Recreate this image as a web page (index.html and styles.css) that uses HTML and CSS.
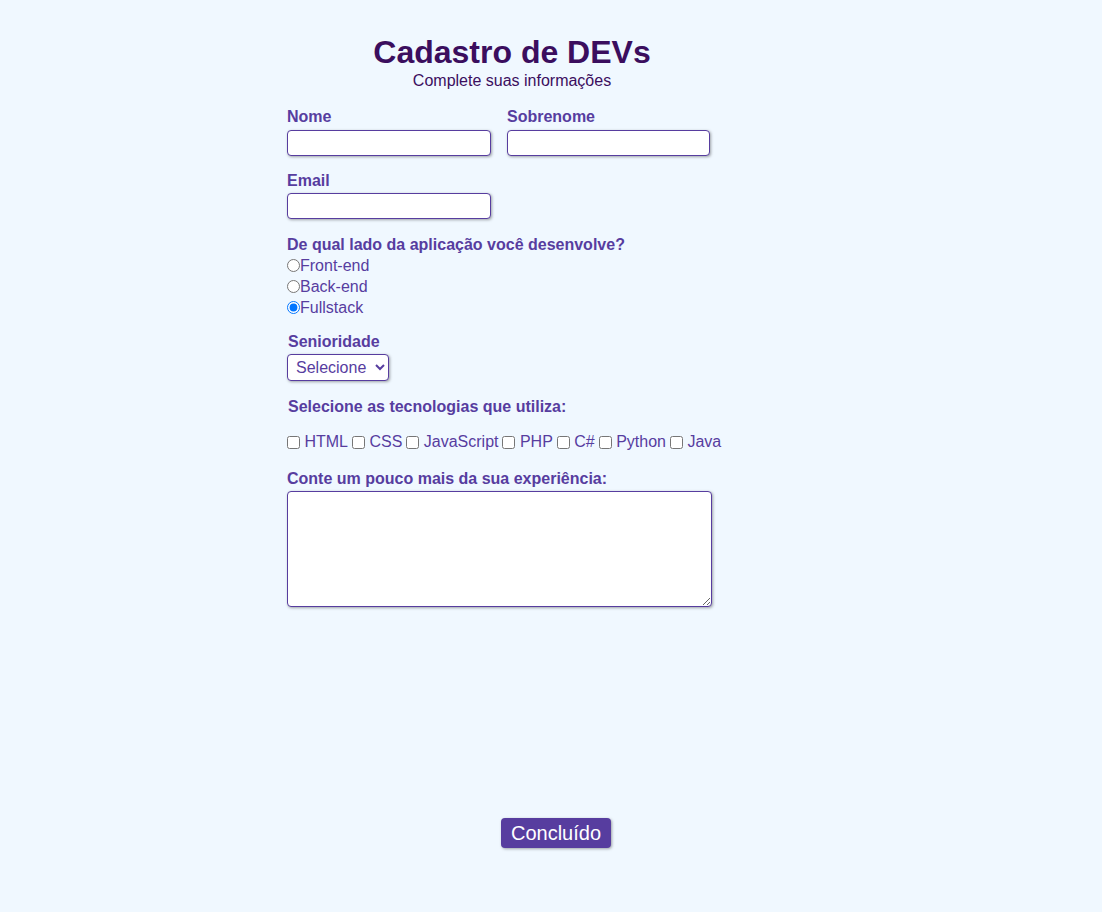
FILE: index.html
```html
<!DOCTYPE html>
<html lang="pt-BR">
<head>
<meta charset="utf-8">
<title>Cadastro de DEVs</title>
<link rel="stylesheet" href="styles.css">
</head>
<body>
<main class="page">
  <form class="form">
    <header class="head">
      <h1 class="title">Cadastro de DEVs</h1>
      <p class="subtitle">Complete suas informações</p>
    </header>

    <div class="row">
      <div class="field">
        <label class="label" for="nome">Nome</label>
        <input class="input" id="nome" type="text">
      </div>
      <div class="field">
        <label class="label" for="sobrenome">Sobrenome</label>
        <input class="input" id="sobrenome" type="text">
      </div>
    </div>

    <div class="field block">
      <label class="label snug" for="email">Email</label>
      <input class="input" id="email" type="email">
    </div>

    <div class="group side">
      <span class="label tight">De qual lado da aplicação você desenvolve?</span>
      <label class="opt"><input type="radio" name="lado" class="radio">Front-end</label>
      <label class="opt"><input type="radio" name="lado" class="radio">Back-end</label>
      <label class="opt"><input type="radio" name="lado" class="radio" checked>Fullstack</label>
    </div>

    <div class="field indent senior">
      <label class="label snug" for="sen">Senioridade</label>
      <select class="select" id="sen">
        <option>Selecione</option>
        <option>Júnior</option>
        <option>Pleno</option>
        <option>Sênior</option>
      </select>
    </div>

    <div class="group techs">
      <span class="label indent">Selecione as tecnologias que utiliza:</span>
      <div class="checks">
        <label class="chk"><input type="checkbox" class="box"> HTML</label>
        <label class="chk"><input type="checkbox" class="box"> CSS</label>
        <label class="chk"><input type="checkbox" class="box"> JavaScript</label>
        <label class="chk"><input type="checkbox" class="box"> PHP</label>
        <label class="chk"><input type="checkbox" class="box"> C#</label>
        <label class="chk"><input type="checkbox" class="box"> Python</label>
        <label class="chk"><input type="checkbox" class="box"> Java</label>
      </div>
    </div>

    <div class="field experience">
      <label class="label snug" for="exp">Conte um pouco mais da sua experiência:</label>
      <textarea class="textarea" id="exp"></textarea>
    </div>
  </form>
  <div class="actions">
    <button class="btn" type="button">Concluído</button>
  </div>
</main>
</body>
</html>
```
FILE: styles.css
```css
html, body {
  margin: 0;
  padding: 0;
  background: #f0f8ff;
  font-family: "Liberation Sans", Arial, sans-serif;
  font-size: 16px;
}

.page {
  min-height: 912px;
  display: flex;
  flex-direction: column;
}

.form {
  width: 450px;
  margin-left: 287px;
  display: flex;
  flex-direction: column;
}

.head {
  text-align: center;
  padding-top: 34px;
}

.title {
  margin: 0;
  font-size: 32px;
  font-weight: bold;
  color: #3b0e5e;
  line-height: 37px;
}

.subtitle {
  margin: 1px 0 0;
  font-size: 16px;
  color: #3b0e5e;
  line-height: 18px;
}

.row {
  display: flex;
  gap: 16px;
  margin-top: 18px;
}

.field {
  display: flex;
  flex-direction: column;
  align-items: flex-start;
}

.block {
  margin-top: 16px;
}

.indent {
  margin-left: 1px;
}

.label {
  font-weight: bold;
  color: #573d9f;
  line-height: 18px;
  margin-bottom: 4px;
}

.tight {
  margin-bottom: 1px;
}

.snug {
  margin-bottom: 3px;
}

.input {
  width: 204px;
  height: 26px;
  box-sizing: border-box;
  border: 1px solid #573d9f;
  border-radius: 4px;
  background: #fff;
  box-shadow: 1px 1px 3px rgba(0, 0, 0, 0.35);
  margin: 0;
  padding: 2px 4px;
}

#sobrenome {
  width: 203px;
}

.group {
  display: flex;
  flex-direction: column;
  align-items: flex-start;
}

.side {
  margin-top: 17px;
}

.opt {
  display: flex;
  align-items: center;
  color: #573d9f;
  line-height: 21px;
  height: 21px;
}

.radio {
  margin: 0;
  width: 13px;
  height: 13px;
}

.senior {
  margin-top: 15px;
}

.select {
  height: 27px;
  width: 102px;
  box-sizing: border-box;
  border: 1px solid #573d9f;
  border-radius: 4px;
  background: #fff;
  color: #573d9f;
  font-family: "Liberation Sans", Arial, sans-serif;
  font-size: 16px;
  padding: 0 2px 0 4px;
  box-shadow: 1px 1px 3px rgba(0, 0, 0, 0.35);
  margin: 0 0 0 -1px;
}

.techs {
  margin-top: 17px;
}

.checks {
  display: flex;
  margin-top: 13px;
  color: #573d9f;
  gap: 4px;
}

.chk {
  display: flex;
  align-items: center;
  white-space: pre;
  line-height: 18px;
}

.box {
  margin: 0;
  width: 13px;
  height: 13px;
}

.experience {
  margin-top: 19px;
}

.textarea {
  width: 425px;
  height: 116px;
  box-sizing: border-box;
  border: 1px solid #573d9f;
  border-radius: 4px;
  background: #fff;
  box-shadow: 1px 1px 3px rgba(0, 0, 0, 0.35);
  margin: 0;
  resize: both;
}

.actions {
  display: flex;
  justify-content: center;
  padding-left: 10px;
  margin-top: 211px;
}

.btn {
  background: #573d9f;
  color: #fff;
  border: none;
  border-radius: 4px;
  font-family: "Liberation Sans", Arial, sans-serif;
  font-size: 20px;
  height: 30px;
  width: 110px;
  padding: 0;
  box-shadow: 1px 1px 3px rgba(0, 0, 0, 0.35);
}
```
